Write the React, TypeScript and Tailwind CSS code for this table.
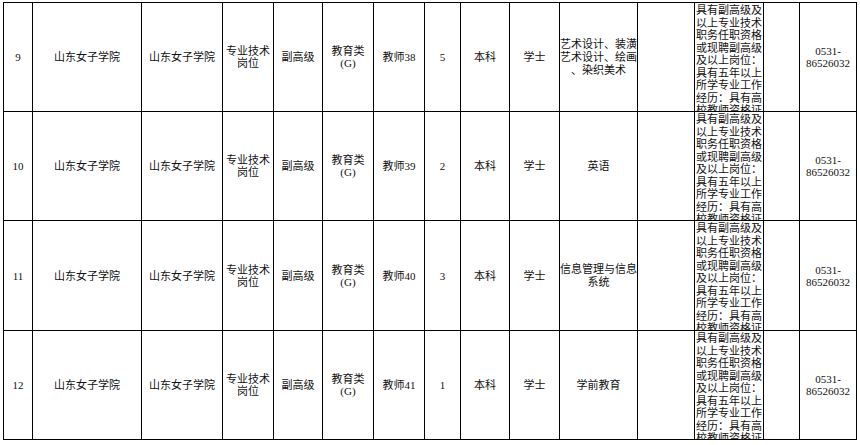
const colWidths = [29, 109, 81, 51, 49, 51, 51, 36, 49, 50, 78, 57, 69, 36, 57];
const rowHeights = [109, 109, 110, 109];

const requirement = [
  "具有副高级及",
  "以上专业技术",
  "职务任职资格",
  "或现聘副高级",
  "及以上岗位：",
  "具有五年以上",
  "所学专业工作",
  "经历：具有高",
  "校教师资格证",
  "书。",
];

type Row = {
  no: string;
  post: string;
  count: string;
  major: string[];
};

const rows: Row[] = [
  { no: "9", post: "教师38", count: "5", major: ["艺术设计、装潢", "艺术设计、绘画", "、染织美术"] },
  { no: "10", post: "教师39", count: "2", major: ["英语"] },
  { no: "11", post: "教师40", count: "3", major: ["信息管理与信息", "系统"] },
  { no: "12", post: "教师41", count: "1", major: ["学前教育"] },
];

const Lines = ({ lines, loose }: { lines: string[]; loose?: boolean }) => (
  <div className={loose ? "text-center whitespace-nowrap leading-[13px]" : "text-center whitespace-nowrap"}>
    {lines.map((l, i) => (
      <div key={i}>{l}</div>
    ))}
  </div>
);

const Cell = ({ children }: { children?: React.ReactNode }) => (
  <div className="border-r border-b border-black flex items-center justify-center overflow-hidden">
    {children}
  </div>
);

export default function App() {
  return (
    <div
      className="w-[860px] h-[445px] bg-white pl-[3px] pt-[2px] text-[11px] leading-[12px] text-[#111]"
      style={{ fontFamily: '"Liberation Serif", "Noto Sans CJK SC", serif' }}
    >
      <div
        className="grid border-l border-t border-black w-[854px]"
        style={{
          gridTemplateColumns: colWidths.map((w) => `${w}px`).join(" "),
          gridTemplateRows: rowHeights.map((h) => `${h}px`).join(" "),
        }}
      >
        {rows.map((r) => (
          <div key={r.no} className="contents">
            <Cell>{r.no}</Cell>
            <Cell>山东女子学院</Cell>
            <Cell>山东女子学院</Cell>
            <Cell>
              <Lines lines={["专业技术", "岗位"]} />
            </Cell>
            <Cell>副高级</Cell>
            <Cell>
              <Lines lines={["教育类", "(G)"]} />
            </Cell>
            <Cell>{r.post}</Cell>
            <Cell>{r.count}</Cell>
            <Cell>本科</Cell>
            <Cell>学士</Cell>
            <Cell>
              <Lines lines={r.major} loose />
            </Cell>
            <Cell />
            <div className="border-r border-b border-black overflow-hidden pl-[1px] pt-[1px]">
              <div className="whitespace-nowrap leading-[12.5px]">
                {requirement.map((l, i) => (
                  <div key={i}>{l}</div>
                ))}
              </div>
            </div>
            <Cell />
            <Cell>
              <Lines lines={["0531-", "86526032"]} />
            </Cell>
          </div>
        ))}
      </div>
    </div>
  );
}
